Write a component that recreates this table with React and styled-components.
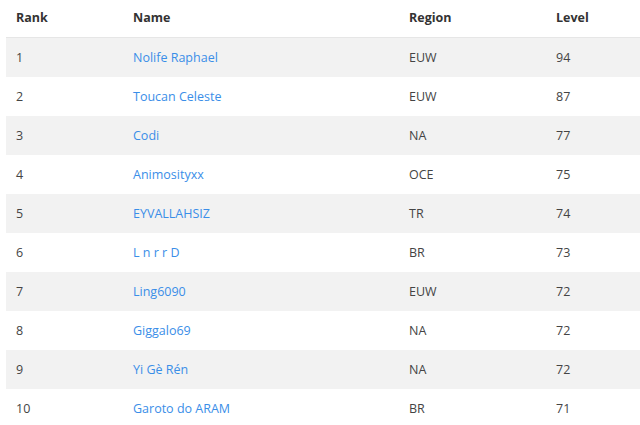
import React from 'react';
import styled, { createGlobalStyle } from 'styled-components';

const players = [
  { rank: 1, name: 'Nolife Raphael', region: 'EUW', level: 94 },
  { rank: 2, name: 'Toucan Celeste', region: 'EUW', level: 87 },
  { rank: 3, name: 'Codi', region: 'NA', level: 77 },
  { rank: 4, name: 'Animosityxx', region: 'OCE', level: 75 },
  { rank: 5, name: 'EYVALLAHSIZ', region: 'TR', level: 74 },
  { rank: 6, name: 'L n r r D', region: 'BR', level: 73 },
  { rank: 7, name: 'Ling6090', region: 'EUW', level: 72 },
  { rank: 8, name: 'Giggalo69', region: 'NA', level: 72 },
  { rank: 9, name: 'Yi Gè Rén', region: 'NA', level: 72 },
  { rank: 10, name: 'Garoto do ARAM', region: 'BR', level: 71 },
];

const GlobalStyle = createGlobalStyle`
  body {
    margin: 0;
    background: #fff;
    font-family: "Open Sans", "Noto Sans", sans-serif;
    color: #333;
  }
`;

const App = () => (
  <>
    <GlobalStyle />
    <Wrapper>
      <Table>
        <colgroup>
          <col style={{ width: 117 }} />
          <col style={{ width: 276 }} />
          <col style={{ width: 147 }} />
          <col />
        </colgroup>
        <thead>
          <tr>
            <HeadCell>Rank</HeadCell>
            <HeadCell>Name</HeadCell>
            <HeadCell>Region</HeadCell>
            <HeadCell>Level</HeadCell>
          </tr>
        </thead>
        <tbody>
          {players.map((p, i) => (
            <Row key={p.rank} $striped={i % 2 === 0}>
              <Cell>{p.rank}</Cell>
              <Cell>
                <PlayerLink href="#">{p.name}</PlayerLink>
              </Cell>
              <Cell>{p.region}</Cell>
              <Cell>{p.level}</Cell>
            </Row>
          ))}
        </tbody>
      </Table>
    </Wrapper>
  </>
);

const Wrapper = styled.div`
  padding-left: 6px;
`;

const Table = styled.table`
  width: 100%;
  border-collapse: collapse;
  table-layout: fixed;
  font-size: 12.5px;
`;

const HeadCell = styled.th`
  text-align: left;
  font-weight: 700;
  color: #333;
  padding: 8px 10px 10px;
  line-height: 19px;
  border-bottom: 1px solid #e6e6e6;
`;

const Row = styled.tr`
  background: ${(p) => (p.$striped ? '#f2f2f2' : '#fff')};
`;

const Cell = styled.td`
  padding: 10px;
  line-height: 19px;
  color: #444;
`;

const PlayerLink = styled.a`
  color: #3a8ee8;
  text-decoration: none;
`;

export default App;
